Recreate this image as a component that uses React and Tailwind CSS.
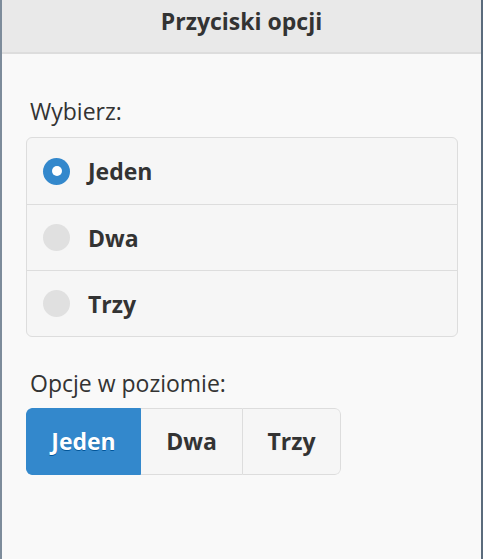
import React, { useState } from "react";

const opts = ["Jeden", "Dwa", "Trzy"];

function Radio({ on }) {
  return on ? (
    <span className="flex h-[27px] w-[27px] shrink-0 items-center justify-center rounded-full bg-[#3388cc]">
      <span className="h-[10px] w-[10px] rounded-full bg-white" />
    </span>
  ) : (
    <span className="h-[27px] w-[27px] shrink-0 rounded-full bg-[#e0e0e0]" />
  );
}

const active = "border-[#3388cc] bg-[#3388cc] text-white [text-shadow:0_1px_0_#005599]";
const idle = "border-[#dddddd] bg-[#f6f6f6] [text-shadow:0_1px_0_#f3f3f3]";

export default function App() {
  const [v, setV] = useState("Jeden");
  const [h, setH] = useState("Jeden");

  return (
    <div
      className="flex h-[559px] w-[483px] flex-col border-l-2 border-r-2 border-l-[#7d8c9b] border-r-[#5a6b7c] bg-[#f9f9f9] text-[#333]"
      style={{ fontFamily: '"Open Sans", "Noto Sans", sans-serif' }}
    >
      {/* header */}
      <div className="h-[54px] border-b-2 border-[#dddddd] bg-[#e9e9e9] pt-[7px] text-center text-[23px] font-bold leading-[28px]">
        Przyciski opcji
      </div>

      <div className="px-[24px]">
        <div className="mt-[43px] pl-[4px] text-[23px] leading-[28px]">Wybierz:</div>

        <div className="mt-[12px] w-[432px] overflow-hidden rounded-[6px] border border-[#dddddd] bg-[#f6f6f6]">
          {opts.map((o, i) => (
            <button
              key={o}
              onClick={() => setV(o)}
              className={
                "flex h-[66px] w-full items-center gap-[18px] pl-[16px] text-left text-[23px] font-bold " +
                (i > 0 ? "border-t border-[#dddddd]" : "")
              }
            >
              <Radio on={v === o} />
              <span className="leading-[28px]">{o}</span>
            </button>
          ))}
        </div>

        <div className="mt-[32px] pl-[4px] text-[23px] leading-[28px]">Opcje w poziomie:</div>

        <div className="mt-[11px] flex h-[67px] w-fit overflow-hidden rounded-[6px] text-[23px] font-bold">
          <button
            onClick={() => setH("Jeden")}
            className={"w-[115px] rounded-l-[6px] border " + (h === "Jeden" ? active : idle)}
          >
            Jeden
          </button>
          <button
            onClick={() => setH("Dwa")}
            className={"w-[101px] border-y " + (h === "Dwa" ? active : idle)}
          >
            Dwa
          </button>
          <button
            onClick={() => setH("Trzy")}
            className={"w-[99px] rounded-r-[6px] border " + (h === "Trzy" ? active : idle)}
          >
            Trzy
          </button>
        </div>
      </div>
    </div>
  );
}
